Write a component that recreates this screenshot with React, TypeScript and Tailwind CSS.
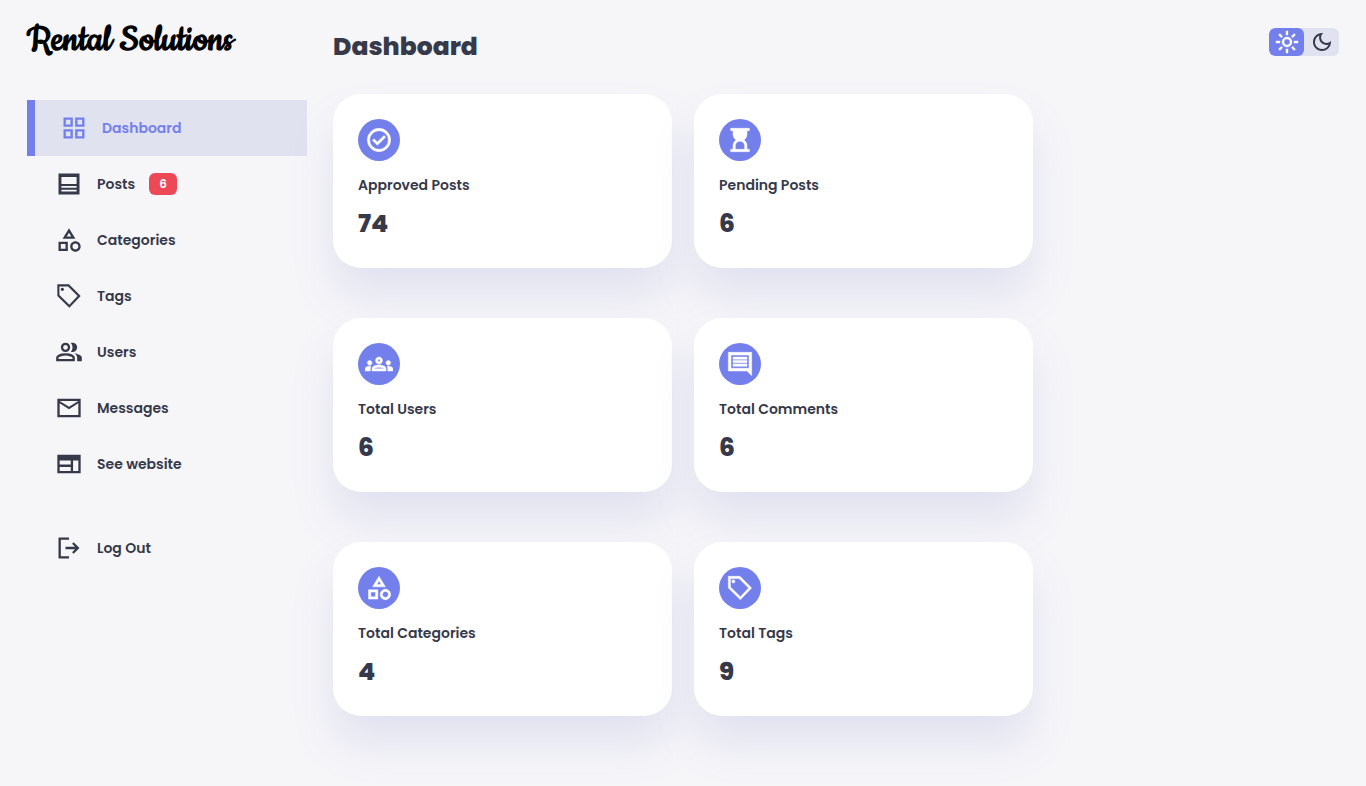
import { useState } from "react";

const icons = {
  grid: "M3 11V3h8v8Zm0 10v-8h8v8Zm10-10V3h8v8Zm0 10v-8h8v8ZM5 9h4V5H5Zm10 0h4V5h-4Zm0 10h4v-4h-4ZM5 19h4v-4H5Z",
  posts: "M3 3h18v18H3ZM5.5 6v6h13V6ZM5.5 13.7v1.5h13v-1.5ZM5.5 17v1.5h13V17Z",
  category:
    "M12 2l-5.5 9h11L12 2zm0 3.84L13.93 9h-3.87L12 5.84zM17.5 13c-2.49 0-4.5 2.01-4.5 4.5s2.01 4.5 4.5 4.5 4.5-2.01 4.5-4.5-2.01-4.5-4.5-4.5zm0 7c-1.38 0-2.5-1.12-2.5-2.5s1.12-2.5 2.5-2.5 2.5 1.12 2.5 2.5-1.12 2.5-2.5 2.5zM3 21.5h8v-8H3v8zm2-6h4v4H5v-4z",
  tag: "M2 2h10l10 10-9.7 10L2 11.9ZM3.8 3.8v7.3l8.5 8.3 7.1-7.3-8.2-8.3ZM6.3 4.9a1.4 1.4 0 1 1 0 2.8 1.4 1.4 0 0 1 0-2.8Z",
  users:
    "M1 20v-2.8q0-.85.438-1.562.437-.713 1.162-1.088 1.55-.775 3.15-1.163Q7.35 13 9 13t3.25.387q1.6.388 3.15 1.163.725.375 1.163 1.088Q17 16.35 17 17.2V20Zm18 0v-3q0-1.1-.612-2.113-.613-1.012-1.738-1.737 1.275.15 2.4.512 1.125.363 2.1.888.9.5 1.375 1.112Q23 16.275 23 17v3ZM9 12q-1.65 0-2.825-1.175T5 8q0-1.65 1.175-2.825T9 4q1.65 0 2.825 1.175T13 8q0 1.65-1.175 2.825T9 12Zm10-4q0 1.65-1.175 2.825T15 12q-.275 0-.7-.062-.425-.063-.7-.138.675-.8 1.037-1.775Q15 9.05 15 8q0-1.05-.363-2.025Q14.275 5 13.6 4.2q.35-.125.7-.163Q14.65 4 15 4q1.65 0 2.825 1.175T19 8ZM3 18h12v-.8q0-.275-.137-.5-.138-.225-.363-.35-1.35-.675-2.725-1.013Q10.4 15 9 15t-2.775.337Q4.85 15.675 3.5 16.35q-.225.125-.362.35-.138.225-.138.5Zm6-8q.825 0 1.413-.588Q11 8.825 11 8t-.587-1.412Q9.825 6 9 6q-.825 0-1.412.588Q7 7.175 7 8t.588 1.412Q8.175 10 9 10Z",
  mail: "M2 20V4h20v16Zm10-7L4 8v10h16V8Zm0-2 8-5H4Z",
  web: "M2 20V4h20v16ZM4 18h9.5v-3.5H4Zm11.5 0H20V9h-4.5ZM4 12.5h9.5V9H4Z",
  logout:
    "M3 21V3h9v2H5v14h7v2Zm13-4-1.375-1.45 2.55-2.55H9v-2h8.175l-2.55-2.55L16 7l5 5Z",
  check:
    "M12 2a10 10 0 1 0 0 20 10 10 0 0 0 0-20Zm0 2a8 8 0 1 1 0 16 8 8 0 0 1 0-16ZM10.6 16.6l7.05-7.05-1.4-1.4-5.65 5.65-2.85-2.85-1.4 1.4Z",
  hourglass:
    "M8 20h8v-3q0-1.65-1.175-2.825T12 13q-1.65 0-2.825 1.175T8 17v3Zm-4 2v-2h2v-3q0-1.525.713-2.863Q7.425 12.8 8.7 12q-1.275-.8-1.987-2.137Q6 8.525 6 7V4H4V2h16v2h-2v3q0 1.525-.712 2.863Q16.575 11.2 15.3 12q1.275.8 1.988 2.137Q18 15.475 18 17v3h2v2Z",
  groups:
    "M4 13c1.1 0 2-.9 2-2s-.9-2-2-2-2 .9-2 2 .9 2 2 2zm1.13 1.1c-.37-.06-.74-.1-1.13-.1-.99 0-1.93.21-2.78.58C.48 14.9 0 15.62 0 16.43V18h4.5v-1.61c0-.83.23-1.61.63-2.29zM20 13c1.1 0 2-.9 2-2s-.9-2-2-2-2 .9-2 2 .9 2 2 2zm4 3.43c0-.81-.48-1.53-1.22-1.85-.85-.37-1.79-.58-2.78-.58-.39 0-.76.04-1.13.1.4.68.63 1.46.63 2.29V18H24v-1.57zm-7.76-2.78c-1.17-.52-2.61-.9-4.24-.9-1.63 0-3.07.39-4.24.9C6.68 14.13 6 15.21 6 16.39V18h12v-1.61c0-1.18-.68-2.26-1.76-2.74zM8.07 16c.09-.23.13-.39.91-.69.97-.38 1.99-.56 3.02-.56s2.05.18 3.02.56c.77.3.81.46.91.69H8.07zM12 8c.55 0 1 .45 1 1s-.45 1-1 1-1-.45-1-1 .45-1 1-1m0-2c-1.66 0-3 1.34-3 3s1.34 3 3 3 3-1.34 3-3-1.34-3-3-3z",
  comment:
    "M22 2H2v16h16l4 4ZM4.3 4.3h15.4v11.4H4.3ZM6 12v2h12v-2ZM6 9v2h12V9ZM6 6v2h12V6Z",
  sun: "M11 1h2v4h-2ZM11 19h2v4h-2ZM1 11h4v2H1ZM19 11h4v2h-4ZM4.9 3.5l2.8 2.8-1.4 1.4-2.8-2.8ZM17.7 16.3l2.8 2.8-1.4 1.4-2.8-2.8ZM19.1 3.5l1.4 1.4-2.8 2.8-1.4-1.4ZM6.3 16.3l1.4 1.4-2.8 2.8-1.4-1.4ZM12 7a5 5 0 1 0 0 10 5 5 0 0 0 0-10Zm0 2a3 3 0 1 1 0 6 3 3 0 0 1 0-6Z",
  moon: "M9.37 5.51c-.18.64-.27 1.31-.27 1.99 0 4.08 3.32 7.4 7.4 7.4.68 0 1.35-.09 1.99-.27C17.45 17.19 14.93 19 12 19c-3.86 0-7-3.14-7-7 0-2.93 1.81-5.45 4.37-6.49zM12 3c-4.97 0-9 4.03-9 9s4.03 9 9 9 9-4.03 9-9c0-.46-.04-.92-.1-1.36-.98 1.37-2.58 2.26-4.4 2.26-2.98 0-5.4-2.42-5.4-5.4 0-1.81.89-3.42 2.26-4.4-.44-.06-.9-.1-1.36-.1z",
};

type IconName = keyof typeof icons;

function Icon({ name, className }: { name: IconName; className: string }) {
  return (
    <svg viewBox="0 0 24 24" fill="currentColor" fillRule="evenodd" aria-hidden="true" className={className}>
      <path d={icons[name]} />
    </svg>
  );
}

const links: { icon: IconName; label: string; badge?: number }[] = [
  { icon: "posts", label: "Posts", badge: 6 },
  { icon: "category", label: "Categories" },
  { icon: "tag", label: "Tags" },
  { icon: "users", label: "Users" },
  { icon: "mail", label: "Messages" },
  { icon: "web", label: "See website" },
];

const stats: { icon: IconName; label: string; value: number }[] = [
  { icon: "check", label: "Approved Posts", value: 74 },
  { icon: "hourglass", label: "Pending Posts", value: 6 },
  { icon: "groups", label: "Total Users", value: 6 },
  { icon: "comment", label: "Total Comments", value: 6 },
  { icon: "category", label: "Total Categories", value: 4 },
  { icon: "tag", label: "Total Tags", value: 9 },
];

const linkClass = "flex h-14 items-center gap-[14px] pl-7 text-sm font-semibold";

export default function App() {
  const [dark, setDark] = useState(false);
  const on = "bg-[#7380ec] text-white";
  return (
    <div className="grid min-h-screen grid-cols-[280px_minmax(0,1fr)_280px] gap-x-[26px] bg-[#f6f6f9] px-[27px] font-['Poppins','Inter',sans-serif] text-[#363949]">
      <aside>
        <a
          href="#home"
          className="flex h-20 items-center font-['Cookie','Kaushan_Script','Liberation_Serif',cursive] text-[42px] font-bold whitespace-nowrap text-black"
        >
          Rental Solutions
        </a>
        <nav className="mt-5 flex flex-col">
          <a
            href="#dashboard"
            aria-current="page"
            className="flex h-14 items-center gap-[14px] border-l-8 border-[#7380ec] bg-[#e1e2f0] pl-[25px] text-sm font-semibold text-[#7380ec]"
          >
            <Icon name="grid" className="size-7" />
            Dashboard
          </a>
          {links.map((l) => (
            <a key={l.label} href="#section" className={linkClass}>
              <Icon name={l.icon} className="size-7" />
              {l.label}
              {l.badge && (
                <span className="flex h-[22px] w-7 items-center justify-center rounded-md bg-[#ec4856] text-xs font-semibold text-white">
                  {l.badge}
                </span>
              )}
            </a>
          ))}
          <a href="#logout" className={linkClass + " mt-7"}>
            <Icon name="logout" className="size-7" />
            Log Out
          </a>
        </nav>
      </aside>

      <main className="pb-[70px]">
        <h1 className="flex h-[94px] items-center text-[25px] font-extrabold">Dashboard</h1>
        <div className="grid grid-cols-2 gap-x-[22px] gap-y-[50px]">
          {stats.map((s) => (
            <section
              key={s.label}
              className="flex h-[174px] flex-col rounded-[28px] bg-white p-[25px] shadow-[0_28px_42px_rgba(132,139,200,0.18)]"
            >
              <span className="flex size-[42px] items-center justify-center rounded-full bg-[#7380ec] text-white">
                <Icon name={s.icon} className="size-7 stroke-current stroke-[0.4]" />
              </span>
              <h3 className="mt-[14px] text-sm leading-5 font-semibold">{s.label}</h3>
              <p className="mt-[13px] text-[25px] leading-8 font-extrabold">{s.value}</p>
            </section>
          ))}
        </div>
      </main>

      <div className="flex items-start justify-end pt-7">
        <div className="flex h-7 w-[70px] overflow-hidden rounded-md bg-[#e1e2f0]">
          <button
            type="button"
            aria-label="Light theme"
            onClick={() => setDark(false)}
            className={"flex flex-1 items-center justify-center rounded-md " + (dark ? "" : on)}
          >
            <Icon name="sun" className="size-6 stroke-current stroke-[0.4]" />
          </button>
          <button
            type="button"
            aria-label="Dark theme"
            onClick={() => setDark(true)}
            className={"flex flex-1 items-center justify-center rounded-md " + (dark ? on : "")}
          >
            <Icon name="moon" className="size-6" />
          </button>
        </div>
      </div>
    </div>
  );
}
